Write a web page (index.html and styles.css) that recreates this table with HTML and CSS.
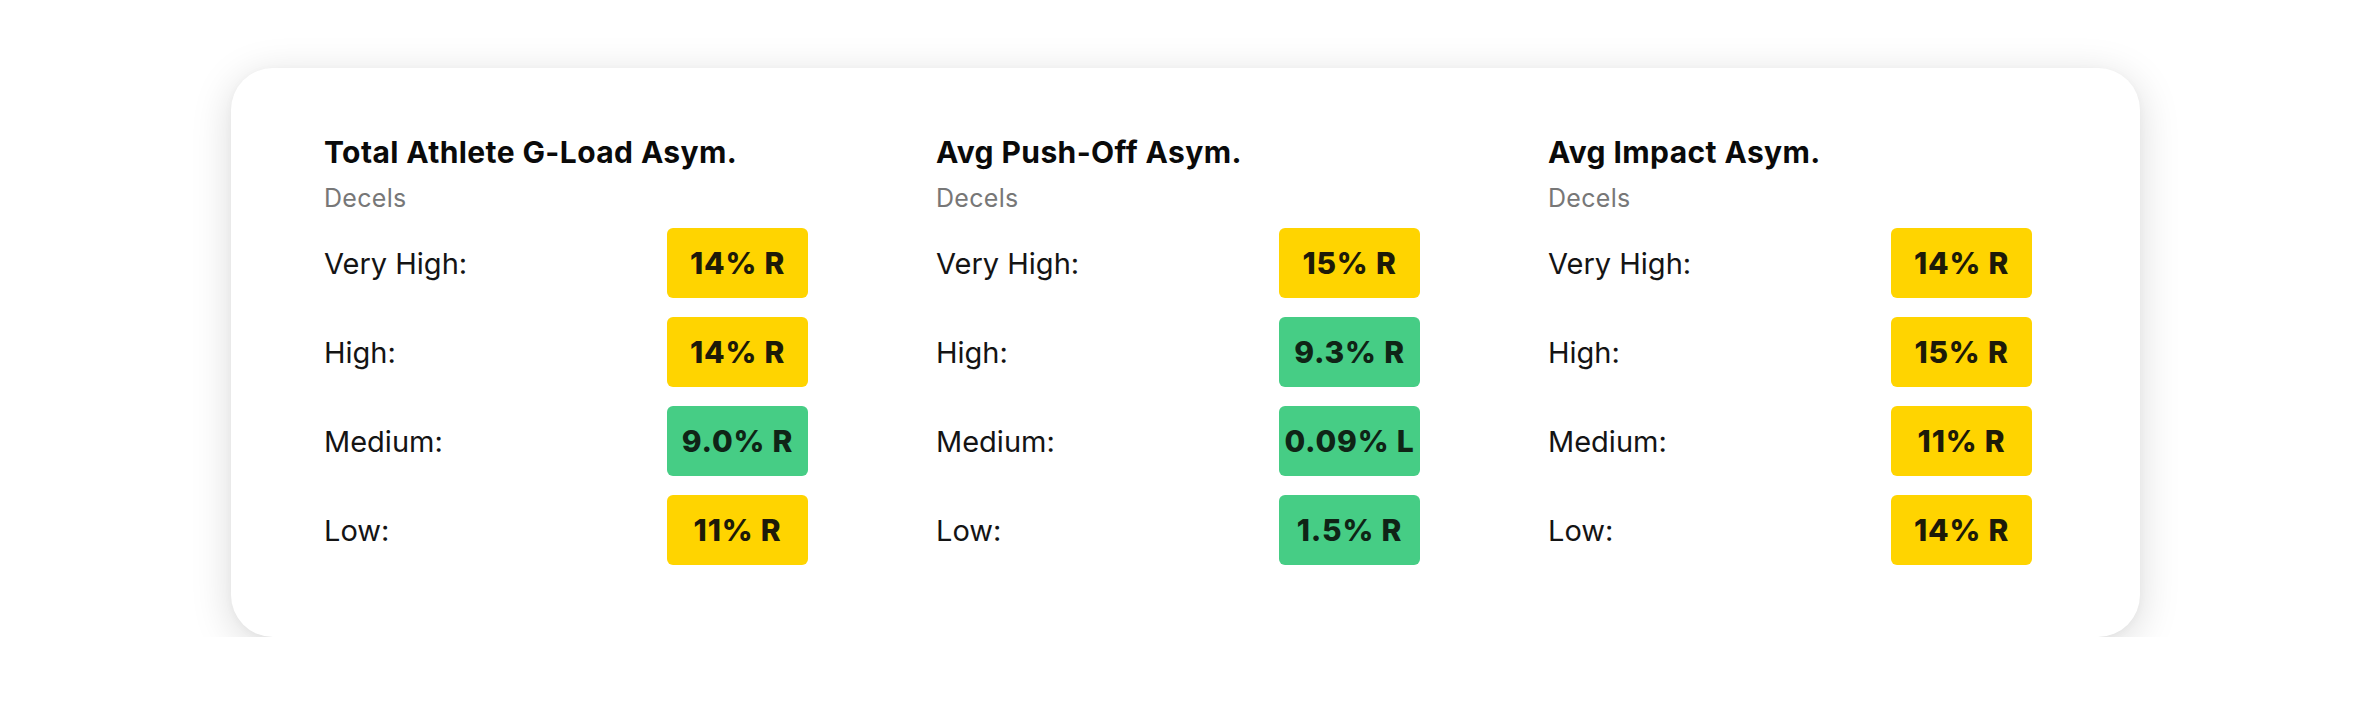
FILE: index.html
```html
<!DOCTYPE html>
<html lang="en">
<head>
<meta charset="utf-8">
<title>Asymmetry</title>
<link rel="stylesheet" href="styles.css">
</head>
<body>
<div class="page">
  <section class="card">
    <div class="col">
      <h2 class="title">Total Athlete G-Load Asym.</h2>
      <div class="sub">Decels</div>
      <div class="rows">
        <div class="row"><span class="label">Very High:</span><span class="badge yellow">14% R</span></div>
        <div class="row"><span class="label">High:</span><span class="badge yellow">14% R</span></div>
        <div class="row"><span class="label">Medium:</span><span class="badge green">9.0% R</span></div>
        <div class="row"><span class="label">Low:</span><span class="badge yellow">11% R</span></div>
      </div>
    </div>
    <div class="col">
      <h2 class="title">Avg Push-Off Asym.</h2>
      <div class="sub">Decels</div>
      <div class="rows">
        <div class="row"><span class="label">Very High:</span><span class="badge yellow">15% R</span></div>
        <div class="row"><span class="label">High:</span><span class="badge green">9.3% R</span></div>
        <div class="row"><span class="label">Medium:</span><span class="badge green">0.09% L</span></div>
        <div class="row"><span class="label">Low:</span><span class="badge green">1.5% R</span></div>
      </div>
    </div>
    <div class="col">
      <h2 class="title">Avg Impact Asym.</h2>
      <div class="sub">Decels</div>
      <div class="rows">
        <div class="row"><span class="label">Very High:</span><span class="badge yellow">14% R</span></div>
        <div class="row"><span class="label">High:</span><span class="badge yellow">15% R</span></div>
        <div class="row"><span class="label">Medium:</span><span class="badge yellow">11% R</span></div>
        <div class="row"><span class="label">Low:</span><span class="badge yellow">14% R</span></div>
      </div>
    </div>
  </section>
</div>
</body>
</html>
```
FILE: styles.css
```css
* { box-sizing: border-box; }
html, body { margin: 0; padding: 0; background: #ffffff; }
body {
  font-family: "Inter", "Noto Sans", "Liberation Sans", sans-serif;
  color: #111111;
}
.page {
  padding-top: 68px;
  padding-left: 231px;
}
.card {
  width: 1909px;
  height: 569px;
  background: #ffffff;
  border-radius: 42px;
  box-shadow: 0 8px 40px rgba(0, 0, 0, 0.15), 0 2px 8px rgba(0, 0, 0, 0.03);
  padding: 66px 0 0 93px;
  display: grid;
  grid-template-columns: repeat(3, 484px);
  column-gap: 128px;
  align-items: start;
}
.col { display: flex; flex-direction: column; }
.title {
  margin: 0;
  font-size: 30px;
  line-height: 36px;
  font-weight: 700;
  color: #0a0a0a;
  letter-spacing: 0.4px;
}
.sub {
  margin-top: 13px;
  font-size: 25px;
  line-height: 30px;
  color: #777777;
  letter-spacing: 0.3px;
}
.rows {
  margin-top: 15px;
  display: flex;
  flex-direction: column;
  gap: 19px;
}
.row {
  display: flex;
  align-items: center;
  justify-content: space-between;
  height: 70px;
}
.label {
  font-size: 29px;
  color: #141414;
}
.badge {
  width: 141px;
  height: 70px;
  border-radius: 6px;
  display: flex;
  align-items: center;
  justify-content: center;
  font-size: 30px;
  font-weight: 800;
  letter-spacing: 0.8px;
  color: #1d1a08;
  white-space: nowrap;
}
.yellow { background: #ffd400; }
.green { background: #46cd85; color: #0f2416; }
```
